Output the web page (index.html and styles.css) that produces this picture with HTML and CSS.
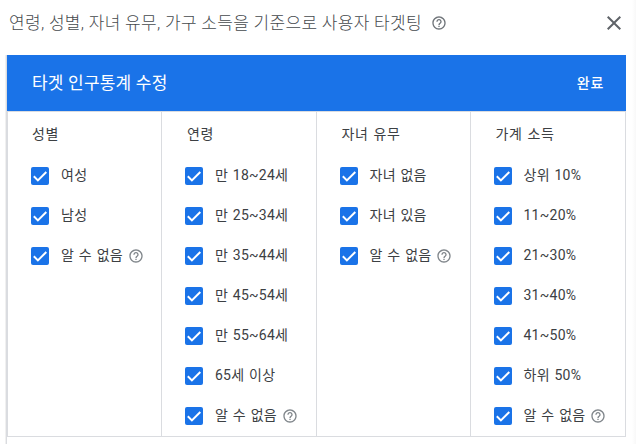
FILE: index.html
```
<!DOCTYPE html>
<html lang="ko">
<head>
    <meta charset="UTF-8">
    <meta name="viewport" content="width=device-width, initial-scale=1.0">
    <title>타겟 인구통계 수정</title>
    <link rel="stylesheet" href="styles.css">
</head>
<body>
    <!-- Shared icons -->
    <svg class="icon-defs" width="0" height="0">
        <symbol id="help" viewBox="0 0 24 24">
            <path d="M11 18h2v-2h-2v2zm1-16C6.48 2 2 6.48 2 12s4.48 10 10 10 10-4.48 10-10S17.52 2 12 2zm0 18c-4.41 0-8-3.59-8-8s3.59-8 8-8 8 3.59 8 8-3.59 8-8 8zm0-14c-2.21 0-4 1.79-4 4h2c0-1.1.9-2 2-2s2 .9 2 2c0 2-3 1.75-3 5h2c0-2.25 3-2.5 3-5 0-2.21-1.79-4-4-4z"/>
        </symbol>
        <symbol id="check" viewBox="0 0 18 18">
            <path d="M2.8 9.3l4.1 4.1L15.3 5" fill="none" stroke="#fff" stroke-width="2"/>
        </symbol>
        <symbol id="close" viewBox="0 0 24 24">
            <path d="M19 6.41L17.59 5 12 10.59 6.41 5 5 6.41 10.59 12 5 17.59 6.41 19 12 13.41 17.59 19 19 17.59 13.41 12z"/>
        </symbol>
    </svg>

    <header class="page-header">
        <h1>연령, 성별, 자녀 유무, 가구 소득을 기준으로 사용자 타겟팅</h1>
        <svg class="help-icon"><use href="#help"/></svg>
        <svg class="close-icon"><use href="#close"/></svg>
    </header>

    <main class="content">
        <div class="panel">
            <div class="panel-header">
                <h2>타겟 인구통계 수정</h2>
                <span class="done">완료</span>
            </div>
            <div class="columns">
                <section class="column">
                    <h3>성별</h3>
                    <div class="option"><svg class="checkbox"><use href="#check"/></svg><span>여성</span></div>
                    <div class="option"><svg class="checkbox"><use href="#check"/></svg><span>남성</span></div>
                    <div class="option"><svg class="checkbox"><use href="#check"/></svg><span>알 수 없음</span><svg class="help-icon"><use href="#help"/></svg></div>
                </section>
                <section class="column">
                    <h3>연령</h3>
                    <div class="option"><svg class="checkbox"><use href="#check"/></svg><span>만 18~24세</span></div>
                    <div class="option"><svg class="checkbox"><use href="#check"/></svg><span>만 25~34세</span></div>
                    <div class="option"><svg class="checkbox"><use href="#check"/></svg><span>만 35~44세</span></div>
                    <div class="option"><svg class="checkbox"><use href="#check"/></svg><span>만 45~54세</span></div>
                    <div class="option"><svg class="checkbox"><use href="#check"/></svg><span>만 55~64세</span></div>
                    <div class="option"><svg class="checkbox"><use href="#check"/></svg><span>65세 이상</span></div>
                    <div class="option"><svg class="checkbox"><use href="#check"/></svg><span>알 수 없음</span><svg class="help-icon"><use href="#help"/></svg></div>
                </section>
                <section class="column">
                    <h3>자녀 유무</h3>
                    <div class="option"><svg class="checkbox"><use href="#check"/></svg><span>자녀 없음</span></div>
                    <div class="option"><svg class="checkbox"><use href="#check"/></svg><span>자녀 있음</span></div>
                    <div class="option"><svg class="checkbox"><use href="#check"/></svg><span>알 수 없음</span><svg class="help-icon"><use href="#help"/></svg></div>
                </section>
                <section class="column">
                    <h3>가계 소득</h3>
                    <div class="option"><svg class="checkbox"><use href="#check"/></svg><span>상위 10%</span></div>
                    <div class="option"><svg class="checkbox"><use href="#check"/></svg><span>11~20%</span></div>
                    <div class="option"><svg class="checkbox"><use href="#check"/></svg><span>21~30%</span></div>
                    <div class="option"><svg class="checkbox"><use href="#check"/></svg><span>31~40%</span></div>
                    <div class="option"><svg class="checkbox"><use href="#check"/></svg><span>41~50%</span></div>
                    <div class="option"><svg class="checkbox"><use href="#check"/></svg><span>하위 50%</span></div>
                    <div class="option"><svg class="checkbox"><use href="#check"/></svg><span>알 수 없음</span><svg class="help-icon"><use href="#help"/></svg></div>
                </section>
            </div>
        </div>
    </main>
</body>
</html>
```
FILE: styles.css
```
body {
    margin: 0;
    height: 444px;
    display: flex;
    flex-direction: column;
    overflow: hidden;
    background: linear-gradient(to left, #f8f8f8, #fff 4px);
    font-family: Roboto, "Noto Sans CJK KR", sans-serif;
    color: #3c4043;
}

h1, h2, h3 {
    margin: 0;
    font-weight: 400;
    white-space: nowrap;
}

.icon-defs {
    display: none;
}

.page-header {
    display: flex;
    align-items: center;
    height: 45px;
    padding: 0 10px 10px 9px;
    color: #45494d;
}

.page-header h1 {
    font-size: 17px;
    font-weight: 300;
    line-height: 24px;
    letter-spacing: 0.3px;
}

.page-header .help-icon {
    margin-left: 9px;
    fill: #6f7479;
}

.help-icon {
    flex: none;
    width: 16px;
    height: 16px;
    fill: #80868b;
}

.close-icon {
    width: 24px;
    height: 24px;
    margin-left: auto;
    fill: #5f6368;
}

.content {
    flex: 1;
    margin-left: 5px;
    border-left: 1px solid #f0f0f0;
    box-shadow: inset 1px 0 #dadce0;
    padding-left: 1px;
}

.panel {
    width: 619px;
    height: 382px;
    display: flex;
    flex-direction: column;
}

.panel-header {
    display: flex;
    justify-content: space-between;
    align-items: center;
    height: 56px;
    box-sizing: border-box;
    padding: 0 22px 2px 25px;
    background-color: #1a73e8;
    color: #fff;
}

.panel-header h2 {
    padding-bottom: 2px;
    font-size: 17px;
    letter-spacing: 0.2px;
}

.done {
    font-size: 14px;
    font-weight: 500;
    letter-spacing: 0.7px;
}

.columns {
    flex: 1;
    display: grid;
    grid-template-columns: 154px 155px 154px 1fr;
    border: 1px solid #dadce0;
    box-sizing: border-box;
}

.column {
    box-sizing: border-box;
    padding: 12px 0 0 23px;
    border-right: 1px solid #dadce0;
    font-size: 14px;
    letter-spacing: 0.25px;
    word-spacing: 1px;
}

.column:nth-child(n+3) {
    padding-left: 22.5px;
}

.column:last-child {
    border-right: none;
}

.column h3 {
    height: 20px;
    padding-left: 2px;
    margin-bottom: 11px;
    font-size: 14px;
    line-height: 20px;
    letter-spacing: 0.6px;
}

.column:first-child h3 {
    padding-left: 1px;
}

.option {
    display: flex;
    align-items: center;
    height: 40px;
    white-space: nowrap;
}

.option span {
    line-height: 20px;
}

.checkbox {
    flex: none;
    width: 18px;
    height: 18px;
    margin: 2px 12px 0 0;
    border-radius: 2px;
    background-color: #1a73e8;
}

.option .help-icon {
    margin: 2px 0 0 5px;
}
```
